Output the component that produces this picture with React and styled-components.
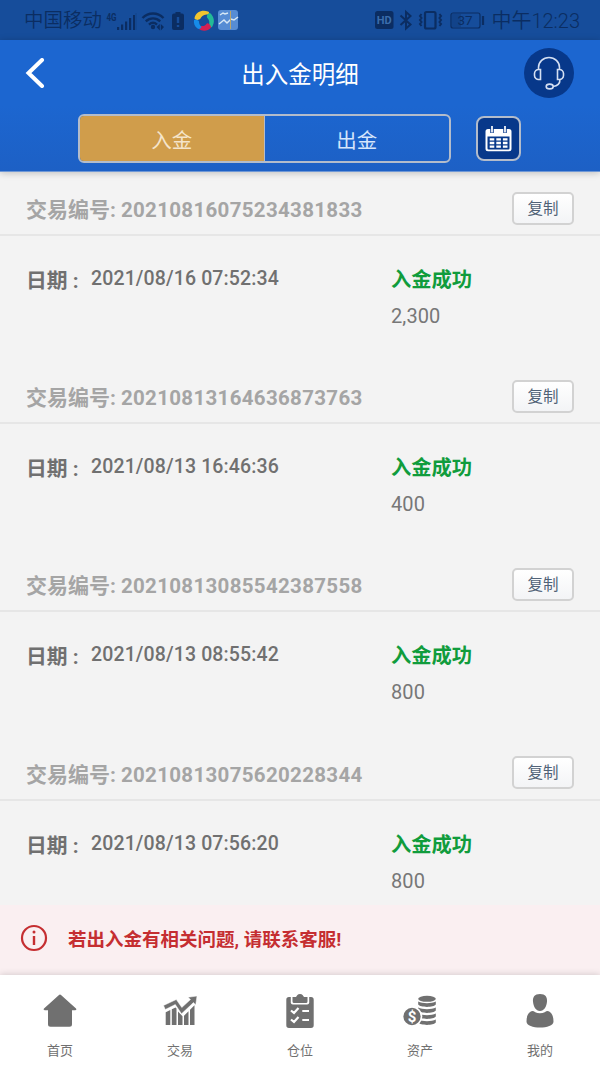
import React, { useState } from 'react';
import styled, { createGlobalStyle, ThemeProvider } from 'styled-components';

const theme = {
  primary: '#1c66d0',
  statusBar: '#164d9b',
  navy: '#07388a',
  gold: '#d09d4b',
  line: '#b3bccb',
  background: '#f3f3f3',
  ink: '#0b2d62',
  green: '#109c3c',
  red: '#c52e31',
  gray: '#707070',
};

const GlobalStyle = createGlobalStyle`
  * {
    box-sizing: border-box;
  }
  body {
    margin: 0;
    font-family: Roboto, 'Noto Sans CJK SC', sans-serif;
    background: ${theme.background};
  }
  button {
    font-family: inherit;
    padding: 0;
    cursor: pointer;
  }
  svg {
    display: block;
    flex: none;
  }
`;

const Screen = styled.div`
  width: 600px;
  height: 1067px;
  display: flex;
  flex-direction: column;
  overflow: hidden;
  background: ${({ theme }) => theme.background};
`;

const StatusBar = styled.div`
  height: 40px;
  flex: none;
  display: flex;
  justify-content: space-between;
  padding: 0 20px 0 24px;
  background: ${({ theme }) => theme.statusBar};
  color: ${({ theme }) => theme.ink};
`;

const StatusGroup = styled.div`
  display: flex;
  align-items: center;
  gap: ${({ $gap }) => $gap || 0}px;
`;

const StatusText = styled.span`
  font-size: ${({ $size }) => $size || 19.5}px;
  font-weight: 350;
  line-height: 38px;
  padding-top: 2px;
  white-space: nowrap;
`;

const Header = styled.header`
  height: 132px;
  flex: none;
  position: relative;
  z-index: 1;
  background: linear-gradient(#1c66d0 50%, #1d60c5);
  border-bottom: 1px solid #6f98d6;
  box-shadow: 0 1px 7px rgba(0, 0, 0, 0.22);
`;

const TitleRow = styled.div`
  height: 66px;
  display: grid;
  grid-template-columns: 50px 1fr 50px;
  align-items: center;
  padding: 0 26px 0 25px;
`;

const BackButton = styled.button`
  border: 0;
  background: none;
`;

const Title = styled.h1`
  margin: 0;
  padding: 3px 0 0 1px;
  color: #fff;
  font-size: 23.5px;
  font-weight: 400;
  line-height: 34px;
  text-align: center;
`;

const SupportButton = styled.button`
  width: 50px;
  height: 50px;
  display: grid;
  place-items: center;
  border: 0;
  border-radius: 50%;
  background: ${({ theme }) => theme.navy};
`;

const FilterRow = styled.div`
  display: flex;
  align-items: center;
  gap: 25px;
  padding: 8px 0 0 78px;
`;

const Tabs = styled.div`
  width: 373px;
  height: 49px;
  display: grid;
  grid-template-columns: 1fr 1fr;
  border: 2px solid ${({ theme }) => theme.line};
  border-radius: 6px;
  overflow: hidden;
`;

const Tab = styled.button`
  border: 0;
  border-right: ${({ $first, theme }) => ($first ? `1px solid ${theme.line}` : 0)};
  background: ${({ $active, theme }) => ($active ? theme.gold : 'transparent')};
  color: ${({ $active }) => ($active ? '#f5e5cb' : '#d6e6fb')};
  font-size: 20.5px;
  line-height: 45px;
  padding-top: 3px;
`;

const CalendarButton = styled.button`
  width: 45px;
  height: 45px;
  display: grid;
  place-items: center;
  border: 2px solid ${({ theme }) => theme.line};
  border-radius: 8px;
  background: ${({ theme }) => theme.navy};
`;

const List = styled.main`
  height: 733px;
  flex: none;
  overflow: hidden;
`;

const Record = styled.section`
  height: 188.2px;
`;

const RecordHead = styled.div`
  height: 64px;
  display: flex;
  align-items: center;
  justify-content: space-between;
  padding: 14px 26px 0;
  border-bottom: 2px solid #e6e6e6;
`;

const RecordNumber = styled.div`
  display: flex;
  align-items: baseline;
  gap: 5px;
  color: #a5a5a5;
  font-size: 21px;
  font-weight: 700;
  line-height: 30px;
  white-space: nowrap;
`;

const Digits = styled.span`
  font-size: 20.5px;
  letter-spacing: 0.32px;
`;

const CopyButton = styled.button`
  width: 62px;
  height: 33px;
  margin-bottom: 4px;
  border: 2px solid #d2d2d2;
  border-radius: 5px;
  background: linear-gradient(#fff, #f3f4f6);
  color: #506277;
  font-size: 15.5px;
  line-height: 27px;
  padding-top: 2px;
`;

const RecordBody = styled.div`
  display: grid;
  grid-template-columns: 365px 1fr;
  padding: 27px 0 0 26px;
`;

const DateLine = styled.div`
  display: flex;
  height: 34px;
  color: ${({ theme }) => theme.gray};
`;

const DateLabel = styled.span`
  width: 65px;
  font-size: 20.8px;
  font-weight: 700;
  line-height: 36px;
  white-space: pre;
`;

const DateValue = styled.span`
  font-size: 19.5px;
  font-weight: 500;
  line-height: 31px;
  letter-spacing: 0.13px;
`;

const Result = styled.div`
  color: ${({ theme }) => theme.green};
  font-size: 20.3px;
  font-weight: 700;
  line-height: 34px;
`;

const Amount = styled.div`
  margin-top: 2px;
  color: #777;
  font-size: 20px;
  line-height: 34px;
  letter-spacing: 0.1px;
`;

const Notice = styled.div`
  height: 70px;
  flex: none;
  display: flex;
  align-items: center;
  gap: 20px;
  padding: 0 20px 4px;
  background: #faeff1;
  color: ${({ theme }) => theme.red};
  font-size: 18.5px;
  font-weight: 700;
  white-space: nowrap;
`;

const BottomNav = styled.nav`
  height: 92px;
  flex: none;
  position: relative;
  display: grid;
  grid-template-columns: repeat(5, 1fr);
  background: #fff;
  box-shadow: 0 0 7px rgba(0, 0, 0, 0.18);
`;

const NavItem = styled.a`
  display: flex;
  flex-direction: column;
  align-items: center;
  gap: 11px;
  padding-top: 18px;
  color: #707070;
  font-size: 13px;
  line-height: 22px;
`;

const Carrier = () => (
  <svg width="136" height="28" viewBox="0 0 136 28">
    <g fill="#0b2d62">
      <text x="3" y="15" fontSize="10" fontWeight="700" fontFamily="Roboto" transform="scale(.8 1)">4G</text>
      <path d="M13 21h2.200v3H13zM17 18.500h2.200V24H17zM21 15.500h2.200V24H21zM25 12h2.200v12H25zM29 9h2v15h-2z" />
      <path d="M31.500 7h1v17h-1z" opacity=".3" />
      <circle cx="49" cy="21" r="2.200" />
      <path d="M52.500 21 55.800 18v6.500zM60 21 56.800 18v6.500z" />
      <path d="M71.500 7.500V6h5v1.500H78a2 2 0 0 1 2 2V22a2 2 0 0 1-2 2h-8a2 2 0 0 1-2-2V9.500a2 2 0 0 1 2-2z" />
    </g>
    <g fill="none" stroke="#0b2d62" strokeWidth="2.400">
      <path d="M38.500 12c6-6 15-6 21 0M41.800 15.400c4.200-4 10.200-4 14.400 0M45 18.700c2.400-2.200 5.600-2.200 8 0" />
      <path d="M74 11v6M74 19v2" stroke="#164d9b" />
    </g>
    <path d="M90.500 12C92 6 98 3.500 104 5.500c1.500.7 1.500 2 0 3-4 .2-6 1-7.500 4-2 2-5 1.800-6 0z" fill="#f3c52e" />
    <path d="M106 7c4.500 4 5 9.500 2 14-1.500.8-3-.2-3-2 .8-3 .3-5-2-7.500-.5-2 1-4.500 3-4.500z" fill="#23ba97" />
    <path d="M107 21.500c-3 4-9 4-12 1.500-.5-1.500.5-2.500 2-3 3 .2 4.500-.5 6-2.800 2-.5 4 2 4 4.300z" fill="#d51f52" />
    <path d="M90 14c2-.5 4.500 0 5 1.500-.2 2 1 4 2.500 5.500-.5 1.500-2.500 2.500-4 1.500-3-2-4-5.500-3.500-8.500z" fill="#168bea" />
    <rect x="114" y="4" width="20" height="20" rx="3" fill="#568cd4" />
    <path d="m115 18 5-4 3 3 4-4 3 1 4-3M116 9l3-2 2 1 3-1" stroke="#d6e7f5" fill="none" strokeWidth="1.500" />
    <path d="M126.500 5v18" stroke="#baa66d" />
  </svg>
);

const DeviceStatus = () => (
  <svg width="116" height="28" viewBox="0 0 116 28">
    <rect x="0" y="5" width="18.500" height="18" rx="2.500" fill="#0b2d62" />
    <g fontFamily="Roboto" fill="#0b2d62">
      <text x="1.700" y="18" fontSize="11" fontWeight="700" fill="#3b6dac">HD</text>
      <rect x="77" y="8" width="9" height="13" opacity=".3" />
      <text x="82.500" y="19" fontSize="13.500">37</text>
    </g>
    <g fill="none" stroke="#0b2d62" strokeWidth="2.200">
      <path d="m25.500 9.500 10 9-4.500 4V6l4.500 4-10 9" strokeWidth="2" />
      <rect x="50" y="6" width="10.500" height="16.500" rx="1.500" />
      <path d="m46.500 8-1.500 2 1.500 2-1.500 2 1.500 2-1.500 2 1.500 2M64.500 8l1.500 2-1.500 2 1.500 2-1.500 2 1.500 2-1.500 2" strokeWidth="2" />
      <rect x="76" y="7" width="29" height="15" rx="2" strokeWidth="1.200" />
      <path d="M108 10v9" />
    </g>
  </svg>
);

const Headset = () => (
  <svg width="34" height="36" viewBox="0 0 34 36" fill="none" stroke="#d4dff2" strokeWidth="1.600">
    <path d="M6.500 14.500v-2a10.500 10 0 0 1 21 0v2M8.500 14.500H7a4 4 0 0 0-4.500 4v2a4 4 0 0 0 4.500 4h1.500zM25.500 14.500H27a4 4 0 0 1 4.500 4v2a4 4 0 0 1-4.500 4h-1.500zM28 24.500c0 4-3 6.500-7 7" />
    <ellipse cx="17.700" cy="31.500" rx="3.500" ry="2.400" />
  </svg>
);

const Calendar = () => (
  <svg width="27" height="28" viewBox="0 0 27 28">
    <path d="M3 4h21a2.500 2.500 0 0 1 2.500 2.500v17.300a2.500 2.500 0 0 1-2.500 2.500H3a2.500 2.500 0 0 1-2.500-2.500V6.500A2.500 2.500 0 0 1 3 4z" fill="#fff" />
    <path d="M2.500 11.500h22v12a1 1 0 0 1-1 1h-20a1 1 0 0 1-1-1z" fill="#07388a" />
    <path d="M7 2v6M20 2v6" stroke="#07388a" strokeWidth="3.500" />
    <path d="M7 1v6.500M20 1v6.500" stroke="#fff" strokeWidth="1.700" />
    <path d="M4.700 14.300h18M4.700 18h18M4.700 21.700h18" stroke="#fff" strokeWidth="2.300" strokeDasharray="4.600 2" />
  </svg>
);

const icons = {
  home: <path d="M17 1.500a1.300 1.300 0 0 1 1 .4L33 15.500c.7.700.3 1.700-.7 1.700H29v14a2.500 2.500 0 0 1-2.500 2.500h-19A2.500 2.500 0 0 1 5 31.200v-14H1.700c-1 0-1.400-1-.7-1.700L16 1.900a1.300 1.300 0 0 1 1-.4z" />,
  trade: (
    <>
      <path d="M2.700 19.300 7.300 17v15H2.700zM8.800 16.200l3.700-1.800 1 1.200V32H8.800zM15 18.500l4.500 4.800V32H15zM21 22.800l4.500-4.600V32H21zM27 16.700l4.500-4.500V32H27z" />
      <path d="m.5 12.500 12.800-6 5.500 8L27.500 6.500 25 4.300l9-1.300-1.300 9-2.200-2.500L18.500 20.800 12.300 11.500 2.300 16.500z" stroke="#fff" strokeWidth=".5" />
    </>
  ),
  position: (
    <>
      <path d="M6 4h22a2.700 2.700 0 0 1 2.700 2.700v25.600A2.700 2.700 0 0 1 28 35H6a2.700 2.700 0 0 1-2.700-2.700V6.700A2.700 2.700 0 0 1 6 4z" />
      <path d="M7.800 3h18.400v6.500a2 2 0 0 1-2 2H9.800a2 2 0 0 1-2-2z" fill="#fff" />
      <path d="M9.500 4H13c1-1.500 1.500-3 4-3s3 1.500 4 3h3.500v4.500a1.500 1.500 0 0 1-1.500 1.500H11a1.500 1.500 0 0 1-1.500-1.500z" />
      <path d="m8 17.500 3 2.500 4.500-5M8 26.500l3 2.500 4.500-5M19.300 18H26M19.300 27H26" fill="none" stroke="#fff" strokeWidth="2.200" />
    </>
  ),
  assets: (
    <>
      <ellipse cx="24" cy="5.800" rx="8.800" ry="3" />
      <path d="M15.200 8.500c4 2.300 13.600 2.300 17.600 0v3c-2 3.200-15.600 3.200-17.600 0zM15.200 14.500c4 2.300 13.600 2.300 17.600 0v3c-2 3.200-15.600 3.200-17.600 0zM15.200 20.500c4 2.300 13.600 2.300 17.600 0v3c-2 3.200-15.600 3.200-17.600 0zM15.200 26.500c4 2.300 13.600 2.300 17.600 0v3c-2 3.200-15.600 3.200-17.600 0z" />
      <circle cx="9" cy="23.500" r="9.500" stroke="#fff" strokeWidth="1.700" />
      <text x="9" y="28.700" textAnchor="middle" fill="#fff" fontSize="15" fontWeight="700" fontFamily="Roboto">$</text>
    </>
  ),
  mine: (
    <>
      <path d="M17 1c5.500 0 7.300 3 7 7.500-.3 5-3 9.500-7 9.500s-6.700-4.500-7-9.500C9.700 4 11.500 1 17 1z" />
      <path d="M9.500 18c1.500 0 3.500 2.300 7.500 2.300s6-2.300 7.500-2.300c4 .5 6 5 6 10.500 0 8-27 8-27 0 0-5.500 2-10 6-10.500z" />
    </>
  ),
};

const records = [
  { id: '20210816075234381833', date: '2021/08/16 07:52:34', amount: '2,300' },
  { id: '20210813164636873763', date: '2021/08/13 16:46:36', amount: '400' },
  { id: '20210813085542387558', date: '2021/08/13 08:55:42', amount: '800' },
  { id: '20210813075620228344', date: '2021/08/13 07:56:20', amount: '800' },
];

const navItems = [
  { icon: 'home', label: '首页' },
  { icon: 'trade', label: '交易' },
  { icon: 'position', label: '仓位' },
  { icon: 'assets', label: '资产' },
  { icon: 'mine', label: '我的' },
];

const App = () => {
  const [activeTab, setActiveTab] = useState('入金');

  return (
    <ThemeProvider theme={theme}>
      <GlobalStyle />
      <Screen>
        <StatusBar>
          <StatusGroup $gap={2}>
            <StatusText>中国移动</StatusText>
            <Carrier />
          </StatusGroup>
          <StatusGroup>
            <DeviceStatus />
            <StatusText $size={20}>中午12:23</StatusText>
          </StatusGroup>
        </StatusBar>
        <Header>
          <TitleRow>
            <BackButton aria-label="返回">
              <svg width="20" height="30" viewBox="0 0 20 30">
                <path d="M17 2 3.500 15 17 28" fill="none" stroke="#fff" strokeWidth="4" strokeLinecap="round" />
              </svg>
            </BackButton>
            <Title>出入金明细</Title>
            <SupportButton aria-label="客服">
              <Headset />
            </SupportButton>
          </TitleRow>
          <FilterRow>
            <Tabs>
              {['入金', '出金'].map((label, index) => (
                <Tab
                  key={label}
                  $first={index === 0}
                  $active={activeTab === label}
                  onClick={() => setActiveTab(label)}
                >
                  {label}
                </Tab>
              ))}
            </Tabs>
            <CalendarButton aria-label="日历">
              <Calendar />
            </CalendarButton>
          </FilterRow>
        </Header>
        <List>
          {records.map(({ id, date, amount }) => (
            <Record key={id}>
              <RecordHead>
                <RecordNumber>
                  <span>交易编号:</span>
                  <Digits>{id}</Digits>
                </RecordNumber>
                <CopyButton>复制</CopyButton>
              </RecordHead>
              <RecordBody>
                <DateLine>
                  <DateLabel>日期 :</DateLabel>
                  <DateValue>{date}</DateValue>
                </DateLine>
                <div>
                  <Result>入金成功</Result>
                  <Amount>{amount}</Amount>
                </div>
              </RecordBody>
            </Record>
          ))}
        </List>
        <Notice>
          <svg width="28" height="28" viewBox="0 0 28 28" fill="none" stroke="#c52e31" strokeWidth="2.200">
            <circle cx="14" cy="14" r="12" />
            <path d="M14 12v9" strokeWidth="2.400" />
            <circle cx="14" cy="8" r="1.500" fill="#c52e31" stroke="none" />
          </svg>
          <span>若出入金有相关问题, 请联系客服!</span>
        </Notice>
        <BottomNav>
          {navItems.map(({ icon, label }) => (
            <NavItem key={icon}>
              <svg width="34" height="36" viewBox="0 0 34 36" fill="#707070">
                {icons[icon]}
              </svg>
              <span>{label}</span>
            </NavItem>
          ))}
        </BottomNav>
      </Screen>
    </ThemeProvider>
  );
};

export default App;
